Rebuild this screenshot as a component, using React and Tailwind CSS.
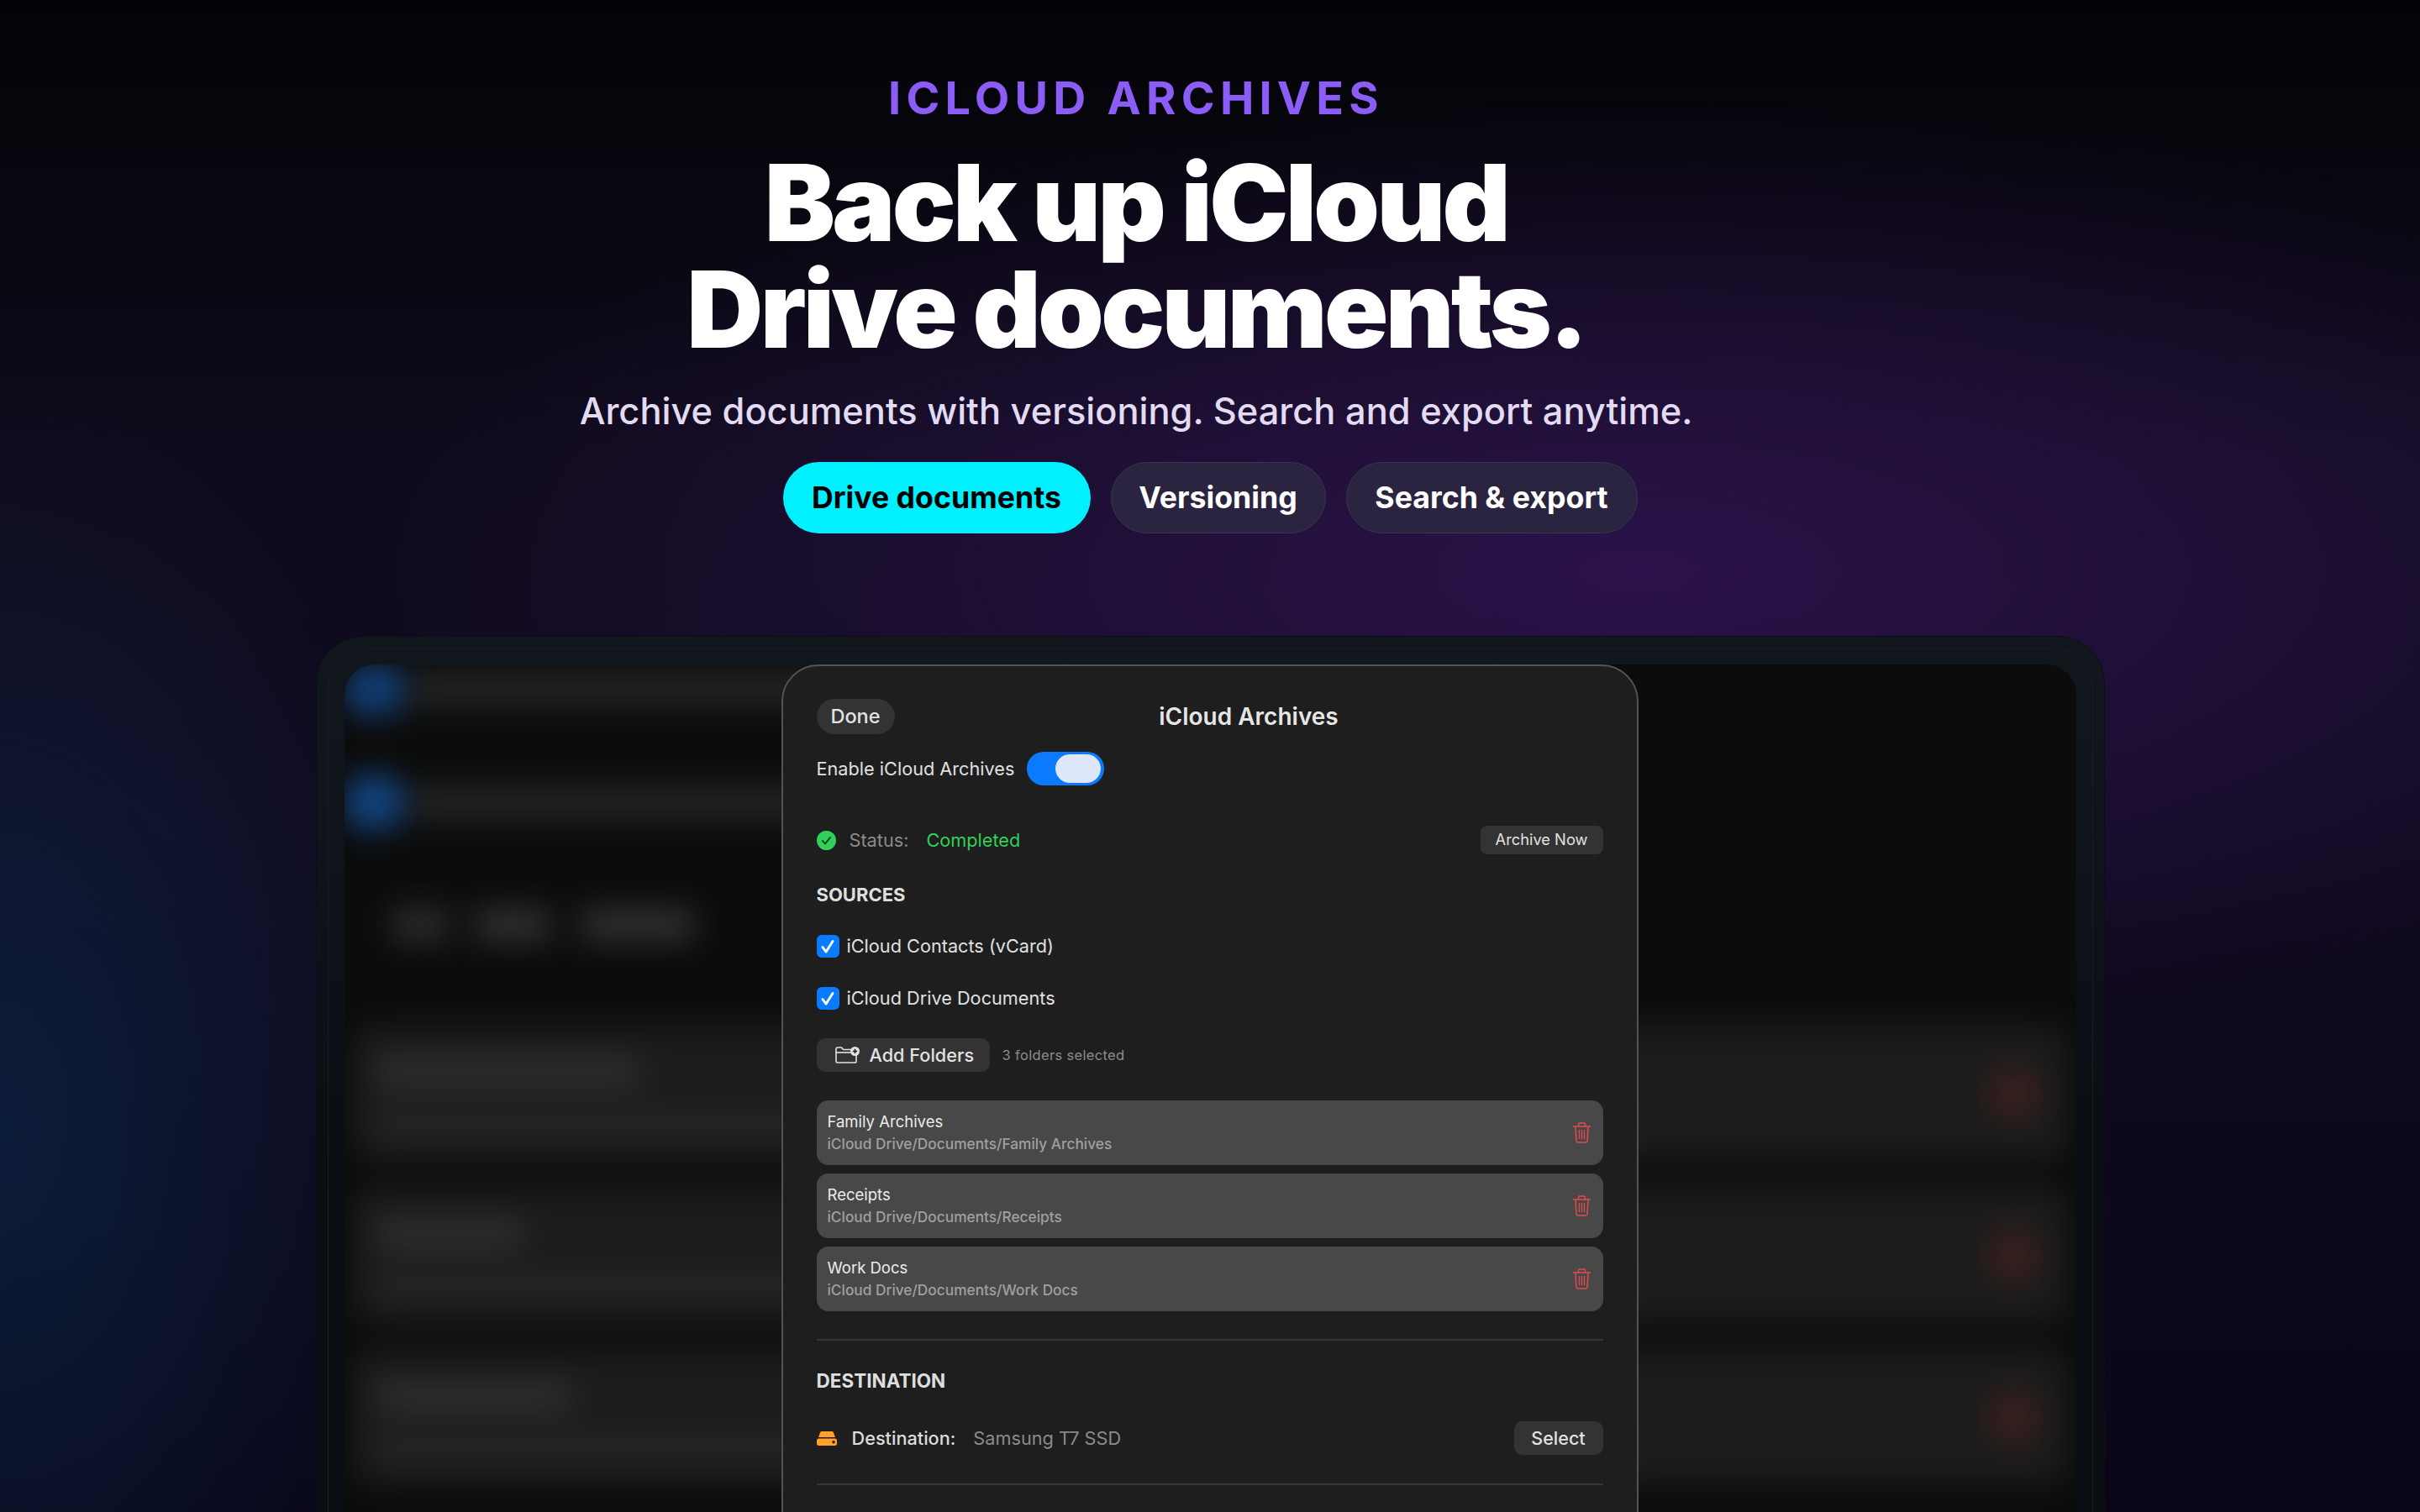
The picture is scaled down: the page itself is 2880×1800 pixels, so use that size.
function FolderPlusIcon() {
  return (
    <svg viewBox="0 0 29 20" className="h-[20px] w-[29px]" fill="none">
      <path d="M19 3.500H9.500L7.500 1H3a2 2 0 0 0-2 2v14.500a1.500 1.500 0 0 0 1.500 1.500h21a1.500 1.500 0 0 0 1.500-1.500V10" stroke="#e4e4e4" strokeWidth="1.600" strokeLinejoin="round" />
      <path d="M1 7h17" stroke="#e4e4e4" strokeWidth="1.600" />
      <circle cx="23.500" cy="5.500" r="5.500" fill="#e4e4e4" />
      <path d="M23.500 2.800v5.400M20.800 5.500h5.400" stroke="#1e1e1e" strokeWidth="1.600" />
    </svg>
  )
}

function TrashIcon() {
  return (
    <svg viewBox="0 0 21 25" className="h-[25px] w-[21px]" fill="none" stroke="#e5484d" strokeWidth="1.500">
      <path d="M0.500 5h20" strokeLinecap="round" />
      <path d="M6.500 5V2.400C6.500 1.500 7 1 8 1h5c1 0 1.500.5 1.500 1.400V5" />
      <path d="M3 5l.9 17.200c.1 1.200.8 1.800 1.900 1.800h9.400c1.100 0 1.800-.6 1.900-1.800L18 5" />
      <path d="M7.500 9v11M10.500 9v11M13.500 9v11" strokeWidth="1.300" />
    </svg>
  )
}

function DriveIcon() {
  return (
    <svg viewBox="0 0 24 17" className="h-[17px] w-[24px]">
      <path d="M6 0h12c1 0 1.600.5 2 1.500L22 7H2l2-5.500C4.400.5 5 0 6 0z" fill="#ff9f2e" />
      <path d="M2.500 8.500h19A2.500 2.500 0 0 1 24 11v3.500a2.500 2.500 0 0 1-2.500 2.500h-19A2.500 2.500 0 0 1 0 14.500V11a2.500 2.500 0 0 1 2.500-2.500z" fill="#ff9f2e" />
      <circle cx="20" cy="12.800" r="1.700" fill="#1e1e1e" />
    </svg>
  )
}

function Checkbox({ label }) {
  return (
    <div className="flex items-center gap-[9px]">
      <div className="flex h-[27px] w-[27px] items-center justify-center rounded-[6px] bg-[#0a7bff]">
        <svg viewBox="0 0 20 20" className="h-[22px] w-[22px]" fill="none">
          <path d="M4.500 10.500l3.800 5L15.500 4" stroke="#fff" strokeWidth="2.600" strokeLinecap="round" strokeLinejoin="round" />
        </svg>
      </div>
      <span className="text-[21.700px] leading-[27px] text-[#e0e0e0]">{label}</span>
    </div>
  )
}

function FolderRow({ name, path }) {
  return (
    <div className="flex h-[77px] items-center justify-between rounded-[14px] bg-[#484848] pl-[13px] pr-[15px]">
      <div className="flex flex-col gap-[1px]">
        <span className="text-[18.500px] leading-[25px] text-[#ececec]">{name}</span>
        <span className="text-[17.300px] font-medium leading-[25px] text-[#a0a0a0]">{path}</span>
      </div>
      <TrashIcon />
    </div>
  )
}

function BlurRow({ titleW }) {
  return (
    <div className="flex h-[160px] items-center justify-between rounded-[24px] bg-[#1c1c1c] pl-[24px] pr-[32px]">
      <div className="mt-[10px] flex flex-col gap-[30px]">
        <div className="h-[36px] rounded-full bg-[#2e2e2e]" style={{ width: titleW }} />
        <div className="h-[30px] w-[1500px] rounded-full bg-[#262626]" />
      </div>
      <div className="h-[64px] w-[64px] rounded-full bg-[#3a1e1e]" />
    </div>
  )
}

export default function App() {
  return (
    <div className="relative h-[1800px] w-[2880px] overflow-hidden bg-[linear-gradient(#030306,#0f0b1c_30%,#100a20_55%,#0a0618)] font-[Inter,sans-serif]">
      <div className="absolute inset-0 bg-[radial-gradient(ellipse_1500px_560px_at_1950px_680px,rgba(62,24,105,0.6),transparent),radial-gradient(ellipse_540px_900px_at_0px_1350px,rgba(10,48,84,0.5),transparent)]" />

      <div className="relative mr-[176px] flex flex-col items-center pt-[90px]">
        <div className="text-[54px] font-bold leading-none tracking-[0.115em] text-[#8b5cf6]">ICLOUD ARCHIVES</div>
        <h1 className="mt-[34px] text-center text-[126px] font-black leading-[127px] tracking-[-0.029em] text-white">
          Back up iCloud
          <br />
          Drive documents.
        </h1>
        <p className="mt-[27px] text-[43.400px] font-medium leading-[60px] text-[#e2dcf2]">Archive documents with versioning. Search and export anytime.</p>
      </div>

      <div className="relative mt-[31px] flex justify-center gap-[24px]">
        <div className="flex h-[85px] w-[366px] items-center justify-center rounded-full bg-[#00f0ff] text-[35.700px] font-bold text-black">Drive documents</div>
        <div className="flex h-[85px] w-[256px] items-center justify-center rounded-full border border-[#3a3450] bg-[#2a2440] text-[35.700px] font-bold text-white">Versioning</div>
        <div className="flex h-[85px] w-[347px] items-center justify-center rounded-full border border-[#3a3450] bg-[#2a2440] text-[35.700px] font-bold text-white">Search &amp; export</div>
      </div>

      <div className="relative mx-auto mt-[122px] h-[1100px] w-[2129px] rounded-t-[56px] border border-[#0b0e13] bg-[linear-gradient(#12171e,#0a0e13_60%)] px-[13px] pt-[13px]">
        <div className="h-[1100px] rounded-t-[46px] border border-[#171d25] px-[19px] pt-[19px]">
          <div className="relative h-[1100px] overflow-hidden rounded-t-[36px] bg-[#0c0c0c]">
            {/* screen behind the sheet, out of focus */}
            <div className="flex flex-col blur-[18px]">
              <div className="flex h-[60px] items-center gap-[10px]">
                <div className="h-[60px] w-[70px] rounded-[20px] bg-[#123f78]" />
                <div className="h-[40px] w-[800px] bg-[#252525]" />
              </div>
              <div className="mt-[72px] flex h-[64px] items-center gap-[10px]">
                <div className="h-[64px] w-[70px] rounded-[24px] bg-[#134480]" />
                <div className="h-[40px] w-[900px] bg-[#252525]" />
              </div>
              <div className="mt-[94px] flex h-[40px] items-center pl-[56px]">
                <div className="h-[40px] w-[68px] bg-[#2c2c2c]" />
                <div className="ml-[31px] h-[40px] w-[90px] bg-[#303030]" />
                <div className="ml-[36px] h-[40px] w-[135px] bg-[#303030]" />
              </div>
              <div className="mt-[100px] flex flex-col gap-[33px] px-[10px]">
                <BlurRow titleW={320} />
                <BlurRow titleW={180} />
                <BlurRow titleW={240} />
              </div>
            </div>

            {/* settings sheet */}
            <div className="absolute left-[520px] top-0 h-[1200px] w-[1020px] rounded-t-[44px] border-2 border-[#535353] bg-[#1e1e1e] px-[40px] pt-[39px]">
              <div className="flex items-center">
                <div className="flex h-[42px] w-[93px] items-center justify-center rounded-full bg-[#333333] text-[23.500px] font-medium text-[#e2e2e2]">Done</div>
                <div className="flex-1 text-center text-[28px] font-semibold leading-[40px] text-[#e6e6e6]">iCloud Archives</div>
              </div>

              <div className="mt-[21px] flex items-center gap-[15px]">
                <span className="text-[21.700px] text-[#e0e0e0]">Enable iCloud Archives</span>
                <div className="flex h-[40px] w-[92px] items-center justify-end rounded-full bg-[#0a7bff] pr-[4px]">
                  <div className="h-[34px] w-[54px] rounded-full bg-[#dfe8fb]" />
                </div>
              </div>

              <div className="mt-[48px] flex h-[34px] items-center">
                <svg viewBox="0 0 23 23" className="h-[23px] w-[23px]">
                  <circle cx="11.500" cy="11.500" r="11.500" fill="#30d158" />
                  <path d="M7 12l3 3.500 6-7.500" stroke="#10301c" strokeWidth="1.800" fill="none" strokeLinecap="round" strokeLinejoin="round" />
                </svg>
                <span className="ml-[16px] text-[21.700px] text-[#8a8a8a]">Status:</span>
                <span className="ml-[21px] text-[21.700px] text-[#30d158]">Completed</span>
                <div className="ml-auto flex h-[34px] w-[146px] items-center justify-center rounded-[8px] bg-[#333333] text-[18.300px] text-[#e2e2e2]">Archive Now</div>
              </div>

              <div className="mt-[33px] text-[22px] font-bold leading-[30px] text-[#dedede]">SOURCES</div>
              <div className="mt-[33px]">
                <Checkbox label="iCloud Contacts (vCard)" />
              </div>
              <div className="mt-[35px]">
                <Checkbox label="iCloud Drive Documents" />
              </div>

              <div className="mt-[34px] flex items-center gap-[15px]">
                <div className="flex h-[40px] w-[206px] items-center gap-[12px] rounded-[10px] bg-[#333333] pl-[22px]">
                  <FolderPlusIcon />
                  <span className="text-[21.700px] font-medium text-[#e2e2e2]">Add Folders</span>
                </div>
                <span className="text-[16.500px] tracking-[0.02em] text-[#8c8c8c]">3 folders selected</span>
              </div>

              <div className="mt-[34px] flex flex-col gap-[10px]">
                <FolderRow name="Family Archives" path="iCloud Drive/Documents/Family Archives" />
                <FolderRow name="Receipts" path="iCloud Drive/Documents/Receipts" />
                <FolderRow name="Work Docs" path="iCloud Drive/Documents/Work Docs" />
              </div>

              <div className="mt-[33px] h-[2px] bg-[#363636]" />
              <div className="mt-[33px] text-[22.500px] font-bold leading-[30px] text-[#dedede]">DESTINATION</div>

              <div className="mt-[33px] flex h-[40px] items-center">
                <DriveIcon />
                <span className="ml-[18px] text-[21.700px] font-medium text-[#dcdcdc]">Destination:</span>
                <span className="ml-[21px] text-[21.700px] text-[#8a8a8a]">Samsung T7 SSD</span>
                <div className="ml-auto flex h-[40px] w-[106px] items-center justify-center rounded-[10px] bg-[#333333] text-[21.500px] font-medium text-[#e2e2e2]">Select</div>
              </div>

              <div className="mt-[34px] h-[2px] bg-[#363636]" />
            </div>
          </div>
        </div>
      </div>
    </div>
  )
}
